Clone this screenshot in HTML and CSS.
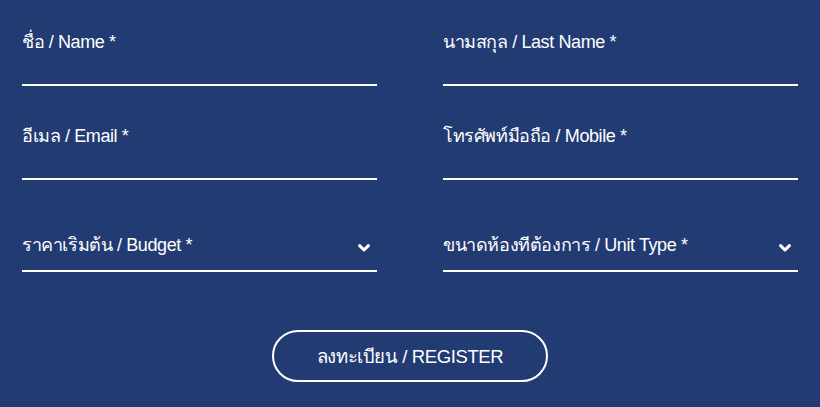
FILE: index.html
```html
<!DOCTYPE html>
<html lang="th">
<head>
    <meta charset="UTF-8">
    <meta name="viewport" content="width=device-width, initial-scale=1.0">
    <title>Register</title>
    <link rel="stylesheet" href="styles.css">
</head>
<body>
    <form class="register-form" action="#" method="post">
        <div class="form-grid">
            <div class="field">
                <label for="name">ชื่อ / Name *</label>
                <input type="text" id="name" name="name" required>
            </div>
            <div class="field">
                <label for="lastname">นามสกุล / Last Name *</label>
                <input type="text" id="lastname" name="lastname" required>
            </div>
            <div class="field">
                <label for="email">อีเมล / Email *</label>
                <input type="email" id="email" name="email" required>
            </div>
            <div class="field">
                <label for="mobile">โทรศัพท์มือถือ / Mobile *</label>
                <input type="tel" id="mobile" name="mobile" required>
            </div>
            <div class="field field-select">
                <select id="budget" name="budget" required>
                    <option value="">ราคาเริ่มต้น / Budget *</option>
                </select>
                <svg class="chevron" viewBox="0 0 12 8" width="12" height="8"><path d="M1.6 1.6 6 6 10.4 1.6" fill="none" stroke="#fff" stroke-width="3" stroke-linecap="round" stroke-linejoin="round"/></svg>
            </div>
            <div class="field field-select">
                <select id="unit" name="unit" required>
                    <option value="">ขนาดห้องที่ต้องการ / Unit Type *</option>
                </select>
                <svg class="chevron" viewBox="0 0 12 8" width="12" height="8"><path d="M1.6 1.6 6 6 10.4 1.6" fill="none" stroke="#fff" stroke-width="3" stroke-linecap="round" stroke-linejoin="round"/></svg>
            </div>
        </div>
        <div class="actions">
            <button type="submit">ลงทะเบียน / REGISTER</button>
        </div>
    </form>
</body>
</html>
```

FILE: styles.css
```css
body {
    margin: 0;
    padding: 0;
    background-color: #233b73;
    color: #ffffff;
    font-family: 'Liberation Sans', 'Noto Sans', sans-serif;
    font-size: 18px;
    letter-spacing: -0.4px;
}

.register-form {
    padding: 30px 22px 0;
}

.form-grid {
    display: grid;
    grid-template-columns: 1fr 1fr;
    column-gap: 66px;
    row-gap: 38px;
}

.field {
    position: relative;
    border-bottom: 2px solid #ffffff;
}

.field label {
    display: block;
    line-height: 24px;
    height: 24px;
}

.field input {
    display: block;
    width: 100%;
    height: 30px;
    padding: 0;
    border: none;
    outline: none;
    background: transparent;
    color: #ffffff;
    font: inherit;
    letter-spacing: inherit;
}

.field select {
    display: block;
    width: 100%;
    height: 52px;
    padding: 1px 0 0;
    border: none;
    outline: none;
    background: transparent;
    color: #ffffff;
    font: inherit;
    letter-spacing: inherit;
    appearance: none;
    -webkit-appearance: none;
    cursor: pointer;
}

.field select option {
    color: #233b73;
}

.chevron {
    position: absolute;
    right: 7px;
    top: 26px;
    pointer-events: none;
}

.actions {
    display: flex;
    justify-content: center;
    margin-top: 58px;
}

button {
    width: 276px;
    height: 52px;
    border: 2px solid #ffffff;
    border-radius: 26px;
    background: transparent;
    color: #ffffff;
    font: inherit;
    font-size: 18.5px;
    letter-spacing: inherit;
    cursor: pointer;
}
```
